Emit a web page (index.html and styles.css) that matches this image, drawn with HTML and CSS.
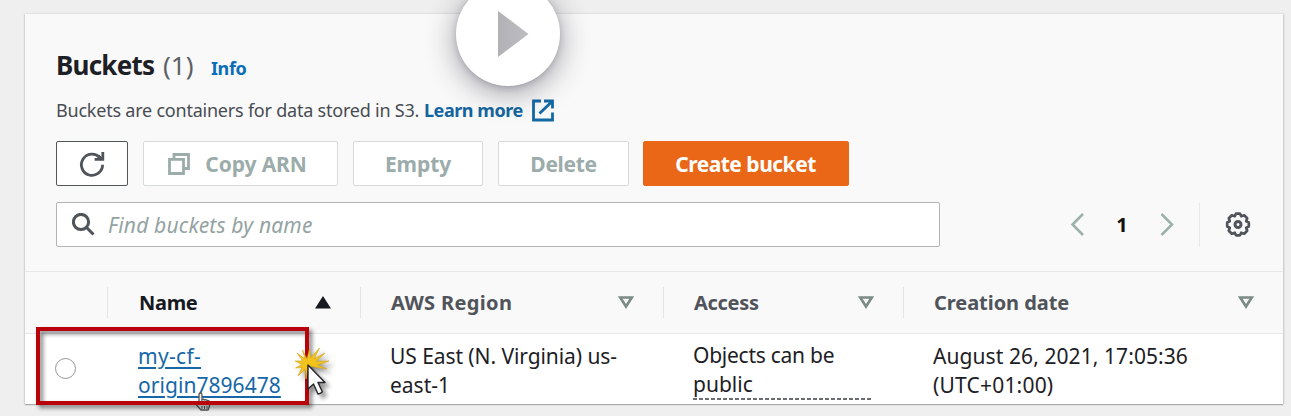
FILE: index.html
```html
<!DOCTYPE html>
<html lang="en">
<head>
<meta charset="utf-8">
<title>Buckets</title>
<link rel="stylesheet" href="styles.css">
</head>
<body>
<main class="card">
  <header class="head">
    <h1 class="title"><span class="title-name">Buckets</span><span class="count">(1)</span><a class="info">Info</a></h1>
    <p class="desc"><span class="desc-text">Buckets are containers for data stored in S3.</span><a class="learn">Learn more</a>
      <svg class="ext" width="22" height="23" viewBox="0 0 22 23" fill="none" stroke="#1469a5" stroke-width="2.8"><path d="M9 2H1.5V21H20.5V13.5M12 2H20.5V9.5M20 2.5L7.5 14.5"/></svg>
    </p>
    <div class="actions">
      <button class="btn refresh"><svg width="28" height="28" viewBox="0 0 28 28" fill="none" stroke="#50545b" stroke-width="2.8"><path d="M24.6 14.8A10.6 10.6 0 1 1 21.8 7.6"/><path d="M24.8 2V9.4H16.6"/><path d="M20 5.5L24 9.4"/></svg></button>
      <button class="btn copy"><svg width="22" height="22" viewBox="0 0 22 22" fill="none" stroke="#9bacaa" stroke-width="2.8"><path d="M1.5 6.3H15.5V20.5H1.5ZM6 6V1.5H20.5V15.5H16"/></svg><span class="t-copy">Copy ARN</span></button>
      <button class="btn empty"><span>Empty</span></button>
      <button class="btn delete"><span>Delete</span></button>
      <button class="btn create"><span>Create bucket</span></button>
    </div>
    <div class="tools">
      <div class="search">
        <svg width="24" height="24" viewBox="0 0 24 24" fill="none" stroke="#50545b" stroke-width="3"><circle cx="9" cy="9" r="7.6"/><path d="M14.5 14.5L21.5 21.5"/></svg>
        <span class="placeholder">Find buckets by name</span>
      </div>
      <nav class="pager">
        <svg width="14" height="24" viewBox="0 0 14 24" fill="none" stroke="#9bb0aa" stroke-width="2.5"><path d="M13 1L2.5 11.5L13 22"/></svg>
        <span class="page">1</span>
        <svg width="14" height="24" viewBox="0 0 14 24" fill="none" stroke="#9bb0aa" stroke-width="2.5"><path d="M1.5 1L12 11.5L1.5 22"/></svg>
      </nav>
      <div class="settings">
        <svg width="26" height="26" viewBox="-13 -12.5 26 26" fill="none" stroke="#50545b" stroke-width="2.7" stroke-linejoin="round"><path d="M-2 -10.8H2L3.2 -8.2L6.2 -9.2L9.2 -6.2L8.2 -3.2L10.8 -2V2L8.2 3.2L9.2 6.2L6.2 9.2L3.2 8.2L2 10.8H-2L-3.2 8.2L-6.2 9.2L-9.2 6.2L-8.2 3.2L-10.8 2V-2L-8.2 -3.2L-9.2 -6.2L-6.2 -9.2L-3.2 -8.2Z"/><circle r="3" stroke-width="3"/></svg>
      </div>
    </div>
  </header>
  <section class="table">
    <div class="row thead">
      <div class="th"></div>
      <div class="th sorted"><span class="h-name">Name</span><svg width="16" height="13" viewBox="0 0 16 13"><path d="M8 0L16 12.5H0Z" fill="#16191f"/></svg></div>
      <div class="th"><span class="h-region">AWS Region</span><svg width="16" height="13" viewBox="0 0 16 13"><path d="M2.2 1.5H13.8L8 10.5Z" fill="none" stroke="#7b8b86" stroke-width="2.7"/></svg></div>
      <div class="th"><span class="h-access">Access</span><svg width="16" height="13" viewBox="0 0 16 13"><path d="M2.2 1.5H13.8L8 10.5Z" fill="none" stroke="#7b8b86" stroke-width="2.7"/></svg></div>
      <div class="th"><span class="h-date">Creation date</span><svg width="16" height="13" viewBox="0 0 16 13"><path d="M2.2 1.5H13.8L8 10.5Z" fill="none" stroke="#7b8b86" stroke-width="2.7"/></svg></div>
    </div>
    <div class="row tbody">
      <div class="td select"><span class="radio"></span></div>
      <div class="td name"><a class="link"><span class="c-my">my-cf-</span><br><span class="c-origin">origin7896478</span></a></div>
      <div class="td"><span class="c-us">US East (N. Virginia) us-</span><br><span class="c-east">east-1</span></div>
      <div class="td access"><div class="dashed"><span class="c-obj">Objects can be</span><br><span class="c-pub">public</span></div></div>
      <div class="td"><span class="c-aug">August 26, 2021, 17:05:36</span><br><span class="c-utc">(UTC+01:00)</span></div>
    </div>
  </section>
</main>
<div class="play"><svg width="32" height="48" viewBox="0 0 32 48"><defs><linearGradient id="pg"><stop offset="0" stop-color="#b1b1b6"/><stop offset="1" stop-color="#bdbdc2"/></linearGradient></defs><path d="M1 1L31.5 24L1 47Z" fill="url(#pg)"/></svg></div>
<svg class="hand" width="18" height="20" viewBox="0 0 18 20"><path d="M5 12V3Q5 1 6.5 1T8 3V8Q9 6.5 10.5 8Q12 7 13 8.5Q15.5 8 15.5 10.5V14Q15 16 14 18H7L2 12.5Q1 10.5 2.5 10.5Z" fill="#eee" stroke="#555" stroke-width="1.3"/><path d="M8 9V12M10.7 9V12M13.2 10V12M8 14V17M10.5 14V17M13 14V17" stroke="#555"/></svg>
<div class="highlight"></div>
<svg class="click" width="46" height="58" viewBox="0 0 46 58"><path d="M13 11L15.5 1L16.5 10L25.5 0L20 11L31 5L22 13.5L35 13L23.5 17L33 21L21 19L14 18L12 31L11 21L4 28L8 19.5L1.5 20L8 16.5L1 13L9 13L3 5L11 11L8.5 2Z" fill="#f2c31a" stroke="#dba91d" stroke-width=".7"/><path d="M14 17V41L19.5 36L24 46Q26.5 46 28.3 43.8L24 34.5H31Z" fill="#fff" stroke="#25252b" stroke-width="1.4" stroke-linejoin="round"/></svg>
</body>
</html>
```
FILE: styles.css
```css
* { box-sizing: border-box; }
body {
  margin: 0; width: 1291px; height: 416px; padding: 14px 8px 0 25px; overflow: hidden;
  background: #efefef; color: #1d2025;
  font-family: "Noto Sans", "Open Sans", sans-serif; font-size: 20px;
}
span, a { white-space: nowrap; }
.card { height: 390px; background: #f9f9f9; box-shadow: 0 1px 1px #aaa, 1px 0 2px #ccc, -1px 0 1px #ddd; }
.head { height: 257px; padding: 34px 31px 0; }
.title { margin: 0; height: 34px; display: flex; align-items: baseline; font-size: 26px; line-height: 34px; font-weight: 700; }
.title-name { width: 107px; letter-spacing: -.75px; }
.count { width: 48px; font-weight: 400; color: #5d6166; }
.info { font-size: 18px; color: #0a6eb6; letter-spacing: -.4px; }
.desc { margin: 14px 0 0; height: 28px; display: flex; align-items: center; font-size: 18px; color: #484c52; }
.desc-text { width: 368px; letter-spacing: -.22px; }
.learn { width: 108px; font-weight: 700; color: #14659f; letter-spacing: -.45px; }
.actions { display: flex; margin-top: 17px; height: 45px; }
.btn { height: 45px; display: flex; align-items: center; justify-content: center; padding: 0; background: #fff; border: 1px solid #d6dada; border-radius: 2px; color: #9bacaa; font: 700 21px "Noto Sans", sans-serif; letter-spacing: -.5px; }
.refresh { width: 72px; border-color: #50545b; }
.copy { width: 195px; margin-left: 15px; gap: 15px; padding-right: 6px; letter-spacing: -.1px; }
.empty { width: 130px; margin-left: 15px; letter-spacing: -.1px; }
.delete { width: 131px; margin-left: 15px; letter-spacing: -.35px; }
.create { width: 206px; margin-left: 14px; padding-right: 1px; background: #e96716; border-color: #e96716; color: #fff; }
.tools { display: flex; align-items: center; margin-top: 16px; height: 45px; }
.search { width: 884px; height: 45px; display: flex; align-items: center; padding-left: 15px; gap: 12px; background: #fff; border: 1px solid #b2b5b5; border-radius: 2px; }
.placeholder { font-style: italic; color: #94a3a2; font-size: 21px; letter-spacing: .18px; }
.pager { margin-left: 130px; display: flex; align-items: center; width: 129px; }
.page { width: 76px; text-align: center; font-weight: 700; color: #111; }
.settings { height: 44px; display: flex; align-items: center; border-left: 1px solid #e7e8e8; padding-left: 25px; }
.row { display: grid; grid-template-columns: 83px 253px 303px 240px 379px; }
.thead { height: 63px; border-top: 1px solid #e7e7e7; border-bottom: 1px solid #e7e7e7; align-items: center; color: #50545a; font-weight: 700; }
.th { height: 31px; display: flex; align-items: center; justify-content: space-between; padding: 0 29px 0 30px; border-right: 1px solid #e4e6e6; letter-spacing: -.3px; }
.th:last-child { border: 0; }
.sorted { color: #16191f; padding-left: 31px; }
.h-region { letter-spacing: .35px; }
.h-date { letter-spacing: -.05px; }
.tbody { height: 70px; background: #fff; font-size: 21px; }
.td { padding: 8px 0 0 29px; line-height: 29px; }
.name { padding-left: 30px; }
.select { padding: 24px 0 0 30px; }
.radio { display: block; width: 21px; height: 21px; border: 1.5px solid #929696; border-radius: 50%; }
.link { color: #1667a7; text-decoration: underline; text-decoration-thickness: 1.5px; text-underline-offset: 3px; }
.c-my { letter-spacing: .3px; }
.c-origin { letter-spacing: .05px; }
.c-us { letter-spacing: -.07px; }
.c-obj { letter-spacing: -.25px; }
.c-aug { letter-spacing: .08px; }
.c-utc { letter-spacing: .2px; }
.access { padding-top: 7px; }
.dashed { width: 178px; height: 59px; background: repeating-linear-gradient(90deg, #6b6e70 0 4px, transparent 4px 6px) bottom / 100% 2px no-repeat; }
.play { position: absolute; left: 456px; top: -18px; width: 104px; height: 104px; border-radius: 50%; background: #fff; box-shadow: 0 6px 30px rgba(40,40,60,.45), 0 2px 6px rgba(40,40,60,.2); padding: 28px 0 0 41px; }
.highlight { position: absolute; left: 36px; top: 327px; width: 273px; height: 78px; border: 4px solid #b70309; filter: drop-shadow(3px 3px 2px rgba(0,0,0,.5)); }
.click { position: absolute; left: 294px; top: 348px; filter: drop-shadow(4px 4px 2px rgba(0,0,0,.4)); }
.hand { position: absolute; left: 194px; top: 392px; }
```
